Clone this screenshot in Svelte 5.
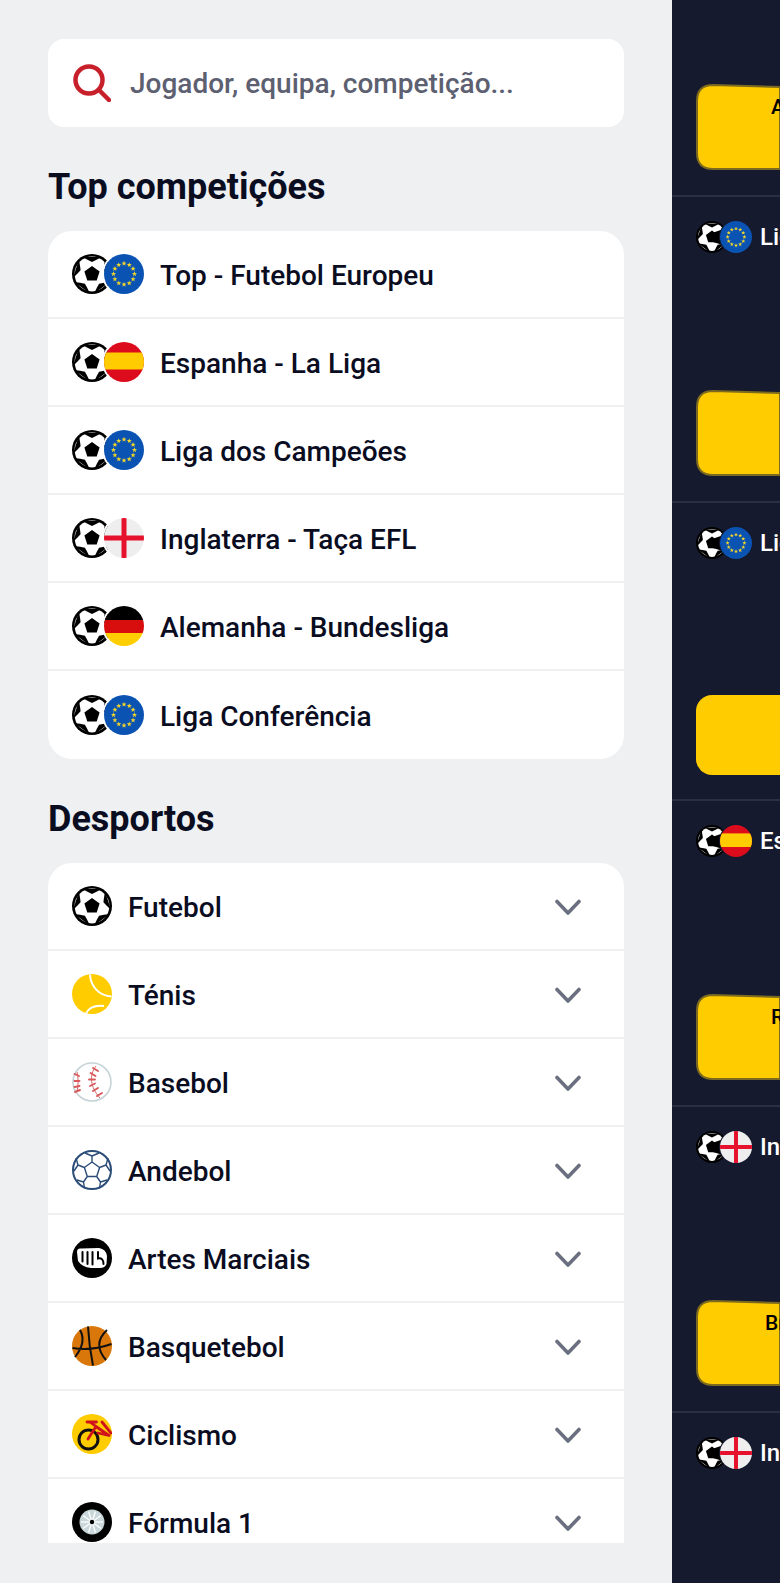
<script>
  const pt = (r, deg, cx = 20, cy = 20) => {
    const a = (deg * Math.PI) / 180;
    return `${(cx + r * Math.cos(a)).toFixed(2)} ${(cy - r * Math.sin(a)).toFixed(2)}`;
  };
  const pentagon = [90, 162, 234, 306, 18].map((d) => pt(8, d)).join(' L');
  const patches = [90, 162, 234, 306, 18].map(
    (d) => `M${pt(19.5, d - 30)} Q${pt(14.5, d - 17)} ${pt(12, d)} Q${pt(14.5, d + 17)} ${pt(19.5, d + 30)} Z`
  );
  const star = (deg) => {
    const [cx, cy] = pt(10.5, deg).split(' ').map(Number);
    const p = [];
    for (let i = 0; i < 10; i++) p.push(pt(i % 2 ? 1.1 : 2.7, 90 + i * 36, cx, cy));
    return p.join(' ');
  };
  const stars = Array.from({ length: 12 }, (_, i) => star(i * 30));
  const spokes = Array.from({ length: 10 }, (_, i) => `M20 20 L${pt(11, i * 36)}`);

  const top = [
    { flag: 'eu', label: 'Top - Futebol Europeu' },
    { flag: 'es', label: 'Espanha - La Liga' },
    { flag: 'eu', label: 'Liga dos Campeões' },
    { flag: 'en', label: 'Inglaterra - Taça EFL' },
    { flag: 'de', label: 'Alemanha - Bundesliga' },
    { flag: 'eu', label: 'Liga Conferência' }
  ];
  const sports = [
    { icon: 'ball', label: 'Futebol' },
    { icon: 'tennis', label: 'Ténis' },
    { icon: 'baseball', label: 'Basebol' },
    { icon: 'handball', label: 'Andebol' },
    { icon: 'fist', label: 'Artes Marciais' },
    { icon: 'basket', label: 'Basquetebol' },
    { icon: 'bike', label: 'Ciclismo' },
    { icon: 'f1', label: 'Fórmula 1' }
  ];
  const events = [
    { flag: 'eu', name: 'Liga dos Campeões', shape: 'bent', team: '' },
    { flag: 'eu', name: 'Liga dos Campeões', shape: 'flat', team: '' },
    { flag: 'es', name: 'Espanha - La Liga', shape: 'bent', team: 'R' },
    { flag: 'en', name: 'Inglaterra - Taça EFL', shape: 'bent', team: 'Br' },
    { flag: 'en', name: 'Inglaterra - Taça EFL', shape: 'none', team: '' }
  ];
</script>

{#snippet ball(inverted)}
  <svg class="ic" viewBox="0 0 40 40">
    <circle cx="20" cy="20" r="20" fill="#000" />
    <circle cx="20" cy="20" r="17.400" fill="#fff" />
    {#each patches as d}<path {d} fill="#000" />{/each}
    <path d="M{pentagon} Z" fill="#000" />
    {#if inverted}<path d="M20 15 L40 8 V32 L20 26 Z" fill="#000" />{/if}
  </svg>
{/snippet}

{#snippet flag(kind)}
  <svg class="ic" viewBox="0 0 40 40">
    <defs><clipPath id="fc"><circle cx="20" cy="20" r="20" /></clipPath></defs>
    <g clip-path="url(#fc)">
      {#if kind === 'eu'}
        <rect width="40" height="40" fill="#0b53b3" />
        {#each stars as p}<polygon points={p} fill="#f0d52a" />{/each}
      {:else if kind === 'es'}
        <rect width="40" height="40" fill="#dd0c1c" />
        <rect y="10.500" width="40" height="17" fill="#fc0" />
      {:else if kind === 'en'}
        <rect width="40" height="40" fill="#eeeeef" />
        <rect x="17.500" width="5" height="40" fill="#e6112d" />
        <rect y="17.500" width="40" height="5" fill="#e6112d" />
      {:else}
        <rect width="40" height="14" fill="#000" />
        <rect y="14" width="40" height="13" fill="#d80d0d" />
        <rect y="27" width="40" height="13" fill="#ffce00" />
      {/if}
    </g>
  </svg>
{/snippet}

{#snippet sport(kind)}
  {#if kind === 'ball'}
    {@render ball(false)}
  {:else}
    <svg class="ic" viewBox="0 0 40 40">
      {#if kind === 'tennis'}
        <circle cx="20" cy="20" r="20" fill="#fc0" />
        <path d="M18 .5C18.500 12 27 22 39.500 22.500M14 39.500C17 33.500 23 31 32 32" fill="none" stroke="#fff" stroke-width="2" />
      {:else if kind === 'baseball'}
        <circle cx="20" cy="20" r="19" fill="#fff" stroke="#c5d3d7" stroke-width="1.600" />
        <path d="M5 10C6.500 16 6.500 23 5 30M24 4C17 13 18 25 28 36" fill="none" stroke="#d9696c" stroke-width="1" />
        <path d="M2.500 12l4.500 2M2.500 19h5M2.500 25l5-1M3 30l5-2M21 6l5 3M18.500 11l5 3M17 17.500h6M18 24l5-2.500M21 29l5-3M25 34l5-3" fill="none" stroke="#d9585c" stroke-width="1.900" stroke-linecap="round" />
      {:else if kind === 'handball'}
        <circle cx="20" cy="20" r="19" fill="#fff" stroke="#2c4c78" stroke-width="2" />
        <path d="M20 12l7.600 5.500-2.900 9h-9.400l-2.900-9zM20 12V6l-7-3M20 6l7-3M27.600 17.500l6.400-2.500 2-7M34 15l4 6M24.700 26.500l3.800 5.500-1 6M28.500 32l6.500-2M15.300 26.500l-3.800 5.500 1 6M11.500 32l-6.500-2M12.400 17.500L6 15l-2-7M6 15l-4 6" fill="none" stroke="#2c4c78" stroke-width="1.400" stroke-linejoin="round" />
      {:else if kind === 'fist'}
        <circle cx="20" cy="20" r="20" fill="#000" />
        <path d="M5 14Q5 10 9 10.500L27 10Q34 11 35 18L34.500 26Q33 30 28 30L19 30Q10 29 6 23Z" fill="#fff" />
        <path d="M10.500 14V23.500M15.500 14V26M20.500 14V26.500M26 14V20.500Q31.500 19.500 31.500 26" fill="none" stroke="#000" stroke-width="2" stroke-linecap="round" />
      {:else if kind === 'basket'}
        <circle cx="20" cy="20" r="20" fill="#d9770b" />
        <path d="M16 .5Q17 20 21 39.500M.5 22Q20 25 39.500 18M8 4Q15 16 3 31M35 4Q20 18 34 34" fill="none" stroke="#111" stroke-width="2" />
      {:else if kind === 'bike'}
        <circle cx="20" cy="20" r="20" fill="#fc0" />
        <circle cx="16.500" cy="25.500" r="9.500" fill="none" stroke="#111" stroke-width="3" />
        <path d="M16 25L24 12.500L37 21.500L26 19M15 8H24.500M18 8L24 12.500M30 8L39 19" fill="none" stroke="#d0121b" stroke-width="2.800" stroke-linecap="round" stroke-linejoin="round" />
      {:else}
        <circle cx="20" cy="20" r="20" fill="#000" />
        <circle cx="20" cy="20" r="12.500" fill="#c9d7da" />
        {#each spokes as d}<path {d} stroke="#fff" stroke-width="1.300" />{/each}
        <circle cx="20" cy="20" r="2.200" fill="#000" />
      {/if}
    </svg>
  {/if}
{/snippet}

<div class="page">
  <main class="left">
    <div class="search">
      <svg class="lens" viewBox="0 0 38 38" fill="none" stroke="#c8202b" stroke-width="4.500" stroke-linecap="round">
        <circle cx="16" cy="16" r="13.500" />
        <path d="M26 26L36 36" />
      </svg>
      <span>Jogador, equipa, competição...</span>
    </div>

    <h2>Top competições</h2>
    <div class="list">
      {#each top as row}
        <div class="row">
          <span class="pair">
            {@render ball(false)}
            <span class="flag">{@render flag(row.flag)}</span>
          </span>
          <span class="label">{row.label}</span>
        </div>
      {/each}
    </div>

    <h2>Desportos</h2>
    <div class="list fill">
      {#each sports as row}
        <div class="row">
          {@render sport(row.icon)}
          <span class="label">{row.label}</span>
          <svg class="chev" viewBox="0 0 26 17" fill="none" stroke="#6b7080" stroke-width="3.600" stroke-linecap="round" stroke-linejoin="round">
            <path d="M2 2.500L13 14L24 2.500" />
          </svg>
        </div>
      {/each}
    </div>
  </main>

  <aside class="right">
    <div class="event first">
      <div class="card bent"><svg class="shape" viewBox="0 0 84 86"><path d="M1 17Q1 1 17 1L84 3V85H17Q1 85 1 69Z" /></svg><b>A</b></div>
    </div>
    {#each events as ev}
      <div class="event">
        <div class="head">
          <span class="pair small">
            {@render ball(true)}
            <span class="flag">{@render flag(ev.flag)}</span>
          </span>
          <span class="name">{ev.name}</span>
        </div>
        {#if ev.shape === 'flat'}
          <div class="card flat"></div>
        {:else if ev.shape === 'bent'}
          <div class="card bent">
            <svg class="shape" viewBox="0 0 84 86"><path d="M1 17Q1 1 17 1L84 3V85H17Q1 85 1 69Z" /></svg>
            {#if ev.team}<b class:br={ev.team === 'Br'}>{ev.team}</b>{/if}
          </div>
        {/if}
      </div>
    {/each}
  </aside>
</div>

<style>
  :global(body) {
    margin: 0;
    background: #eef0f2;
  }
  .page {
    display: flex;
    width: 780px;
    height: 1583px;
    overflow: hidden;
    font-family: Roboto, "Liberation Sans", sans-serif;
  }
  .left {
    box-sizing: border-box;
    width: 672px;
    height: 100%;
    flex: none;
    padding: 39px 48px 40px;
    display: flex;
    flex-direction: column;
    background: #eef0f2;
  }
  .search {
    height: 88px;
    flex: none;
    box-sizing: border-box;
    padding-left: 25px;
    display: flex;
    align-items: center;
    gap: 19px;
    background: #fff;
    border-radius: 16px;
    color: #5c6070;
    font-size: 28px;
    font-weight: 500;
  }
  .lens {
    width: 38px;
    height: 38px;
  }
  h2 {
    box-sizing: border-box;
    margin: 0;
    height: 104px;
    padding-top: 16px;
    flex: none;
    display: flex;
    align-items: center;
    font-size: 36px;
    font-weight: 700;
    color: #0a0d1f;
  }
  .list {
    flex: none;
    background: #fff;
    border-radius: 24px;
    overflow: hidden;
  }
  .list.fill {
    flex: 1;
    min-height: 0;
    border-radius: 24px 24px 0 0;
  }
  .row {
    box-sizing: border-box;
    height: 88px;
    padding: 0 24px;
    display: flex;
    align-items: center;
    border-bottom: 2px solid #eef0f2;
  }
  .list:not(.fill) .row:last-child {
    border-bottom: 0;
  }
  .ic {
    display: block;
    width: 40px;
    height: 40px;
    flex: none;
  }
  .pair {
    display: flex;
    flex: none;
  }
  .flag {
    display: block;
    margin-left: -8px;
    border-radius: 50%;
    box-shadow: 0 0 0 2px #fff;
  }
  .label {
    margin-left: 16px;
    padding-top: 2px;
    font-size: 28px;
    font-weight: 500;
    color: #0a0d1f;
    white-space: nowrap;
  }
  .chev {
    width: 26px;
    height: 17px;
    margin-left: auto;
    margin-right: 19px;
    margin-top: 2px;
  }
  .right {
    flex: 1;
    min-width: 0;
    height: 100%;
    background: #161a2e;
    overflow: hidden;
  }
  .event {
    box-sizing: border-box;
    padding: 24px 0 25px 24px;
    border-bottom: 2px solid #2b2f43;
  }
  .event:last-child {
    border-bottom: 0;
  }
  .event.first {
    padding-top: 84px;
  }
  .head {
    display: flex;
    align-items: center;
    height: 32px;
    white-space: nowrap;
  }
  .small .ic {
    width: 32px;
    height: 32px;
  }
  .small .flag {
    margin-left: -8px;
    box-shadow: 0 0 0 1px #161a2e;
  }
  .name {
    margin-left: 8px;
    color: #fff;
    font-size: 24px;
    font-weight: 500;
  }
  .card {
    position: relative;
    width: 84px;
    color: #000;
    font-size: 21px;
  }
  .card.bent {
    height: 86px;
    margin-top: 137px;
  }
  .first .card.bent {
    margin-top: 0;
  }
  .card.flat {
    height: 80px;
    margin-top: 136px;
    margin-bottom: -1px;
    background: #fc0;
    border-radius: 16px 0 0 16px;
  }
  .shape {
    display: block;
    width: 84px;
    height: 86px;
  }
  .shape path {
    fill: #fc0;
    stroke: #7b6a20;
    stroke-width: 2;
  }
  .card b {
    position: absolute;
    left: 75px;
    top: 11px;
    font-weight: 500;
    line-height: 24px;
  }
  .card b.br {
    left: 69px;
  }
</style>
